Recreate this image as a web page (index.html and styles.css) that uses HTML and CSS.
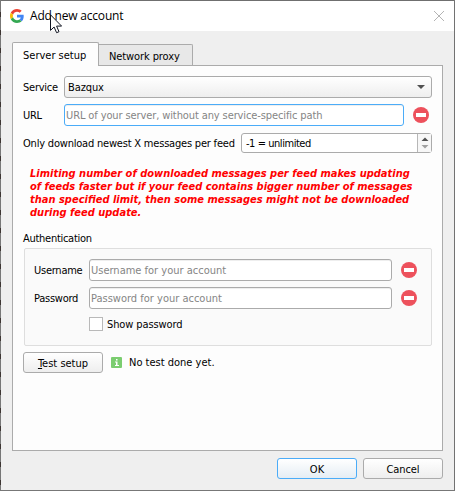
FILE: index.html
```html
<!DOCTYPE html>
<html lang="en">
<head>
<meta charset="utf-8">
<title>Add new account</title>
<link rel="stylesheet" href="styles.css">
</head>
<body>
<svg class="defs" width="0" height="0"><symbol id="minus" viewBox="0 0 16 16"><circle cx="8" cy="8" r="8" fill="#ed515c"/><path d="M3 6h10v4H3z" fill="#fff"/></symbol></svg>
<div class="window">
  <header class="titlebar">
    <svg class="logo" viewBox="0 0 48 48"><path fill="#EA4335" d="M24 9.5c3.54 0 6.71 1.22 9.21 3.6l6.85-6.85C35.9 2.38 30.47 0 24 0 14.62 0 6.51 5.38 2.56 13.22l7.98 6.19C12.43 13.72 17.74 9.5 24 9.5z"/><path fill="#4285F4" d="M46.98 24.55c0-1.57-.15-3.09-.38-4.55H24v9.02h12.94c-.58 2.96-2.26 5.48-4.78 7.18l7.73 6c4.51-4.18 7.09-10.36 7.09-17.65z"/><path fill="#FBBC05" d="M10.53 28.59c-.48-1.45-.76-2.99-.76-4.59s.27-3.14.76-4.59l-7.98-6.19C.92 16.46 0 20.12 0 24c0 3.88.92 7.54 2.56 10.78l7.97-6.19z"/><path fill="#34A853" d="M24 48c6.48 0 11.93-2.13 15.89-5.81l-7.73-6c-2.15 1.45-4.92 2.3-8.16 2.3-6.26 0-11.57-4.22-13.47-9.91l-7.98 6.19C6.51 42.62 14.62 48 24 48z"/></svg>
    <h1 class="title">Add new account</h1>
    <svg class="close" viewBox="0 0 10 10"><path d="M0 0l10 10M10 0L0 10" stroke="#b4b4b4" stroke-width="1"/></svg>
    <svg class="pointer" viewBox="0 0 12 20"><path d="M.5 .8v15.6l3.6-3.4 2.5 5.7 2.4-1-2.4-5.6h5z" fill="#fff" stroke="#111522"/></svg>
  </header>
  <main class="content">
    <nav class="tabs">
      <div class="tab active">Server setup</div>
      <div class="tab"><span class="snug">Network proxy</span></div>
    </nav>
    <section class="pane">
      <div class="row service"><span class="label">Service</span>
        <div class="combo"><span class="snug">Bazqux</span><svg class="arrow" viewBox="0 0 8 4"><path d="M0 0h8L4 4z" fill="#505050"/></svg></div></div>
      <div class="row url"><span class="label">URL</span>
        <div class="field focus">URL of your server, without any service-specific path</div>
        <svg class="minus"><use href="#minus"/></svg></div>
      <div class="row limit"><span class="tight">Only download newest X messages per feed</span>
        <div class="spin"><span>-1 = unlimited</span><div class="steps"><svg viewBox="0 0 8 12"><path d="M.5 4L4 .5 7.500 4z" fill="#505050"/><path d="M.5 8L4 11.500 7.500 8z" fill="#a0a0a0"/></svg></div></div></div>
      <p class="warning"><span>Limiting number of downloaded messages per feed makes updating</span><span>of feeds faster but if your feed contains bigger number of messages</span><span>than specified limit, then some messages might not be downloaded</span><span>during feed update.</span></p>
      <h2 class="heading">Authentication</h2>
      <div class="group">
        <div class="row cred"><span class="label">Username</span><div class="field">Username for your account</div><svg class="minus"><use href="#minus"/></svg></div>
        <div class="row cred"><span class="label">Password</span><div class="field">Password for your account</div><svg class="minus"><use href="#minus"/></svg></div>
        <div class="check"><i class="box"></i><span class="snug">Show password</span></div>
      </div>
      <div class="row test"><div class="button"><u>T</u>est setup</div>
        <svg class="info" viewBox="0 0 11 11"><rect width="11" height="11" rx="1" fill="#7bcd70"/><path d="M5 2h1.500v1.500H5zM4 4.500h2.500V8H8v1H4V8h1V5.500H4z" fill="#fff"/></svg><span>No test done yet.</span></div>
    </section>
    <footer class="actions"><div class="button primary">OK</div><div class="button snug">Cancel</div></footer>
  </main>
</div>
</body>
</html>
```
FILE: styles.css
```css
* { box-sizing: border-box; }
body { margin: 0; width: 455px; height: 491px; padding: 1px; overflow: hidden; background: repeating-linear-gradient(180deg, #777 0 12px, #3d3532 12px 17px, #777 17px 18px); font: 11px/13px "DejaVu Sans Condensed", "DejaVu Sans", sans-serif; font-stretch: condensed; color: #000; white-space: nowrap; }
.defs { position: absolute; }
.snug { letter-spacing: -.1px; }
.tight { letter-spacing: -.2px; }
.window { width: 453px; height: 489px; background: #efefef; box-shadow: 0 -1px #6f6f6f, 1px 0 #727272; }
.titlebar { position: relative; height: 30px; background: #fff; display: flex; align-items: center; padding: 0 9px 1px; }
.logo { width: 14px; height: 14px; }
.title { margin: 0 0 0 6px; font: 12px/16px "Open Sans", sans-serif; letter-spacing: -.2px; }
.close { width: 10px; height: 10px; margin-left: auto; margin-right: 1px; overflow: visible; }
.pointer { position: absolute; left: 49px; top: 13px; width: 12px; height: 20px; z-index: 2; }
.content { padding: 11px 11px 0; }
.tabs { display: flex; align-items: flex-end; height: 23px; }
.tab { width: 94px; height: 21px; padding: 5px 0 0 10px; border: 1px solid #ababab; border-width: 1px 1px 0 0; background: #e8e8e8; border-radius: 0 2px 0 0; }
.tab.active { width: 87px; height: 24px; margin-bottom: -1px; border-left-width: 1px; background: #fdfdfd; border-radius: 2px 2px 0 0; position: relative; z-index: 1; padding-top: 6px; }
.pane { height: 386px; border: 1px solid #ababab; background: #fdfdfd; padding: 10px 10px 0; }
.row { display: flex; align-items: center; }
.label { flex: none; letter-spacing: -.25px; padding-top: 1px; }
.service, .url { height: 22px; margin-bottom: 6px; }
.service .label, .url .label { width: 41px; }
.combo, .spin { flex: 1; height: 22px; border: 1px solid #ababab; border-radius: 3px; display: flex; align-items: center; justify-content: space-between; padding: 0 6px 0 3px; background: linear-gradient(#fff, #eee); }
.arrow { width: 8px; height: 4px; }
.field { flex: none; width: 303px; height: 22px; border: 1px solid #ababab; border-radius: 3px; background: #fff; color: #858585; line-height: 22px; padding-left: 1px; box-shadow: inset 0 1px #eee; }
.field.focus { width: 340px; border-color: #4bacf8; letter-spacing: -.11px; }
.minus { width: 16px; height: 16px; margin-left: 9px; flex: none; }
.limit { height: 20px; justify-content: space-between; margin-top: 7px; }
.limit > .tight { width: 212px; }
.spin { flex: none; width: 191px; height: 20px; background: #fff; padding: 0 0 0 4px; letter-spacing: -.45px; }
.steps { width: 14px; height: 18px; border-left: 1px solid #b7b7b7; background: #f7f7f7; display: grid; place-items: center; }
.steps svg { width: 8px; height: 12px; }
.warning { margin: 14px 0 0 7px; color: #f00; font-weight: bold; font-style: italic; }
.warning span { display: block; }
.heading { font: inherit; margin: 13px 0 3px; letter-spacing: -.28px; }
.group { margin-left: 1px; height: 98px; background: #fafafa; border: 1px solid #dedede; border-radius: 2px; padding: 10px 10px 0 9px; }
.cred { height: 22px; margin-bottom: 6px; }
.cred .label { width: 55px; }
.check { display: flex; align-items: center; height: 14px; margin: 8px 0 0 55px; gap: 4px; }
.box { width: 14px; height: 14px; border: 1px solid #b9b9b9; background: #fff; }
.test { margin-top: 6px; height: 21px; }
.button { width: 80px; height: 21px; border: 1px solid #ababab; border-radius: 3px; background: linear-gradient(#fff, #eee); text-align: center; line-height: 21px; }
.info { width: 11px; height: 11px; margin: 0 7px 0 8px; }
.actions { display: flex; justify-content: flex-end; gap: 6px; padding-top: 7px; }
.primary { border-color: #4bacf8; background: linear-gradient(#fff, #e5edf4); }
```
